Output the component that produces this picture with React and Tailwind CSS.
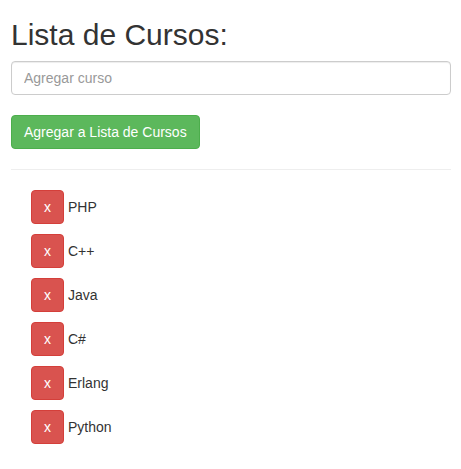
import React from "react";

const cursos = ["PHP", "C++", "Java", "C#", "Erlang", "Python"];

export default function App() {
  return (
    <div
      className="min-h-[469px] bg-white pl-[11px] pr-[10px] text-[14px] leading-[20px] text-[#333]"
      style={{ fontFamily: '"Liberation Sans", Arial, Helvetica, sans-serif' }}
    >
      <h1 className="pt-[18px] mb-[10px] text-[30px] leading-[33px] font-normal text-[#333]">
        Lista de Cursos:
      </h1>
      <input
        type="text"
        placeholder="Agregar curso"
        className="block w-full h-[34px] px-[12px] py-[6px] border border-[#ccc] rounded-[4px] text-[14px] text-[#555] placeholder:text-[#999] shadow-[inset_0_1px_1px_rgba(0,0,0,0.075)] outline-none"
      />
      <button className="mt-[20px] h-[34px] px-[12px] py-[6px] bg-[#5cb85c] border border-[#4cae4c] rounded-[4px] text-white text-[14px] leading-[20px]">
        Agregar a Lista de Cursos
      </button>
      <hr className="mt-[20px] mb-[20px] border-0 border-t border-[#eee]" />
      <ul className="pl-[20px]">
        {cursos.map((c) => (
          <li key={c} className="flex items-center gap-[4px] mb-[10px]">
            <button className="w-[33px] h-[34px] bg-[#d9534f] border border-[#d43f3a] rounded-[4px] text-white text-[14px] leading-[20px] flex items-center justify-center">
              x
            </button>
            <span>{c}</span>
          </li>
        ))}
      </ul>
    </div>
  );
}
